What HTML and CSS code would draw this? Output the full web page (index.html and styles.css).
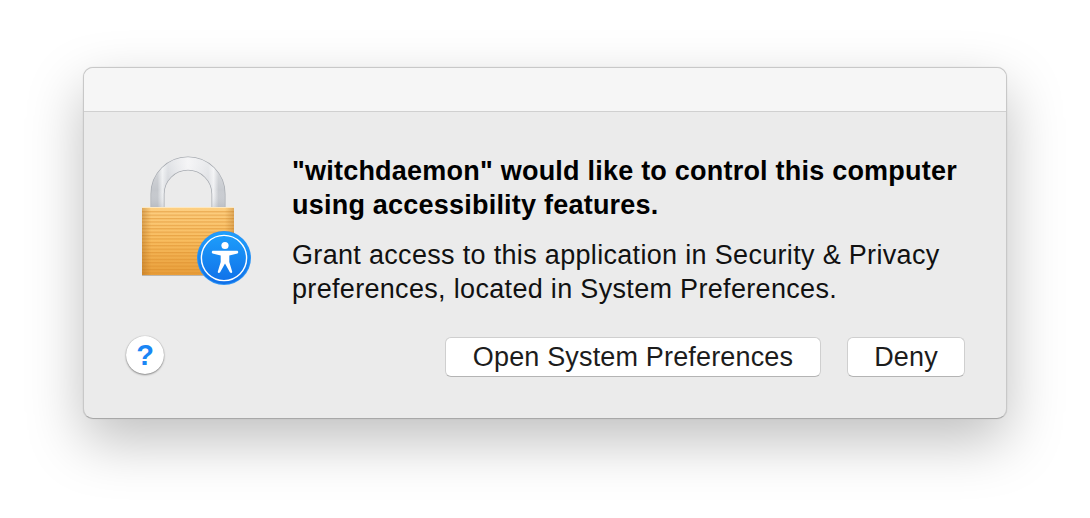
FILE: index.html
```html
<!DOCTYPE html>
<html lang="en">
<head>
    <meta charset="UTF-8">
    <meta name="viewport" content="width=device-width, initial-scale=1.0">
    <title>Accessibility Access</title>
    <link rel="stylesheet" href="styles.css">
</head>
<body>

    <div class="dialog-window">
        <div class="dialog-titlebar"></div>

        <div class="dialog-body">
            <!-- Lock with accessibility badge -->
            <svg class="dialog-icon" width="120" height="140" viewBox="0 0 120 140">
                <defs>
                    <linearGradient id="shackleGrad" x1="0" y1="0" x2="1" y2="0">
                        <stop offset="0" stop-color="#c4c7cc"/>
                        <stop offset="0.08" stop-color="#eceef0"/>
                        <stop offset="0.17" stop-color="#d2d5da"/>
                        <stop offset="0.5" stop-color="#f0f0f2"/>
                        <stop offset="0.83" stop-color="#dcdee2"/>
                        <stop offset="0.92" stop-color="#f0f1f3"/>
                        <stop offset="1" stop-color="#c8cbd0"/>
                    </linearGradient>
                    <linearGradient id="shackleShade" x1="0" y1="0" x2="0" y2="1">
                        <stop offset="0" stop-color="#ffffff" stop-opacity="0.35"/>
                        <stop offset="0.6" stop-color="#ffffff" stop-opacity="0"/>
                        <stop offset="1" stop-color="#8f95a0" stop-opacity="0.25"/>
                    </linearGradient>
                    <linearGradient id="bodyGrad" x1="0" y1="0" x2="0" y2="1">
                        <stop offset="0" stop-color="#fdcf82"/>
                        <stop offset="0.5" stop-color="#f8bc5e"/>
                        <stop offset="1" stop-color="#e89e3a"/>
                    </linearGradient>
                    <linearGradient id="bodySide" x1="0" y1="0" x2="1" y2="0">
                        <stop offset="0" stop-color="#a8691f" stop-opacity="0.4"/>
                        <stop offset="0.1" stop-color="#a8691f" stop-opacity="0"/>
                        <stop offset="0.9" stop-color="#a8691f" stop-opacity="0"/>
                        <stop offset="1" stop-color="#a8691f" stop-opacity="0.35"/>
                    </linearGradient>
                    <pattern id="bodyStripes" width="4" height="3.4" patternUnits="userSpaceOnUse">
                        <rect width="4" height="1.2" fill="#d98a28" fill-opacity="0.5"/>
                    </pattern>
                    <linearGradient id="badgeGrad" x1="0" y1="0" x2="0" y2="1">
                        <stop offset="0" stop-color="#1ea0fc"/>
                        <stop offset="1" stop-color="#0f6fe8"/>
                    </linearGradient>
                </defs>

                <path d="M22.5 58 V44 A30.5 30.5 0 0 1 83.5 44 V58" fill="none" stroke="#a6aab0" stroke-width="14"/>
                <path d="M22.5 58 V44 A30.5 30.5 0 0 1 83.5 44 V58" fill="none" stroke="url(#shackleGrad)" stroke-width="12.6"/>
                <path d="M22.5 58 V44 A30.5 30.5 0 0 1 83.5 44 V58" fill="none" stroke="url(#shackleShade)" stroke-width="12.6"/>

                <rect x="7" y="57" width="92" height="69" fill="#8d8172" fill-opacity="0.5"/>
                <rect x="7" y="57" width="92" height="68" fill="url(#bodyGrad)"/>
                <rect x="7" y="60" width="92" height="65" fill="url(#bodyStripes)"/>
                <rect x="7" y="57" width="92" height="68" fill="url(#bodySide)"/>
                <rect x="7" y="57" width="92" height="1" fill="#fde8c0"/>

                <circle cx="89" cy="108" r="27" fill="#2b93f5"/>
                <circle cx="89" cy="108" r="26" fill="url(#badgeGrad)"/>
                <circle cx="89" cy="108" r="22.6" fill="none" stroke="#fff" stroke-width="1.4"/>
                <circle cx="90" cy="95.5" r="3.6" fill="#fff"/>
                <path d="M77.5 100.8 L102.5 100.8 Q104 102.4 102.5 103.4 L94.3 105.5 L94.3 112 L97.3 122 Q96.8 123.6 95 122.6 L90 113.5 L85 122.6 Q83.2 123.6 82.7 122 L85.7 112 L85.7 105.5 L77.5 103.4 Q76 102.4 77.5 100.8 Z" fill="#fff"/>
            </svg>

            <div class="dialog-text">
                <p class="dialog-heading">"witchdaemon" would like to control this computer using accessibility features.</p>
                <p class="dialog-message">Grant access to this application in Security &amp; Privacy preferences, located in System Preferences.</p>
            </div>
        </div>

        <div class="dialog-footer">
            <button class="dialog-help">?</button>
            <div class="dialog-actions">
                <button class="dialog-btn dialog-btn-open">Open System Preferences</button>
                <button class="dialog-btn dialog-btn-deny">Deny</button>
            </div>
        </div>
    </div>

</body>
</html>
```

FILE: styles.css
```css
html, body {
    margin: 0;
    height: 100%;
    overflow: hidden;
}

body {
    background-color: #fff;
    font-family: 'Liberation Sans', Arial, sans-serif;
    padding: 67px 0 0 83px;
    box-sizing: border-box;
}

/* Window */
.dialog-window {
    width: 924px;
    height: 352px;
    box-sizing: border-box;
    background-color: #ebebeb;
    border: 1px solid #c8c8c8;
    border-bottom-color: #a8a8a8;
    border-radius: 10px;
    box-shadow: 0 22px 56px rgba(0, 0, 0, 0.25), 0 0 1px rgba(0, 0, 0, 0.2);
}

/* Title bar */
.dialog-titlebar {
    height: 43px;
    background-color: #f6f6f6;
    border-bottom: 1px solid #d0d0d0;
    border-radius: 9px 9px 0 0;
}

/* Icon and text */
.dialog-body {
    display: flex;
    padding-top: 38px;
}

.dialog-icon {
    display: block;
    flex: none;
    margin-left: 51px;
}

.dialog-text {
    margin-left: 37px;
    width: 690px;
    margin-top: 4px;
}

.dialog-heading {
    margin: 0 0 16px;
    font-size: 27px;
    font-weight: bold;
    line-height: 34px;
    letter-spacing: 0.22px;
    color: #000;
}

.dialog-message {
    margin: 0;
    font-size: 27px;
    line-height: 34px;
    letter-spacing: 0.32px;
    color: #111;
    width: 670px;
}

/* Footer */
.dialog-footer {
    display: flex;
    align-items: center;
    justify-content: space-between;
    padding: 0 41px 0 42px;
    margin-top: 27px;
}

.dialog-help {
    width: 38px;
    height: 38px;
    padding: 0;
    border: none;
    border-radius: 50%;
    background-color: #fff;
    box-shadow: 0 1px 2px rgba(0, 0, 0, 0.4), 0 0 1px rgba(0, 0, 0, 0.3);
    color: #1a86f5;
    font-family: 'Liberation Sans', Arial, sans-serif;
    font-size: 29px;
    font-weight: bold;
    line-height: 38px;
}

.dialog-actions {
    display: flex;
    gap: 26px;
    margin-top: 4px;
}

.dialog-btn {
    height: 40px;
    padding: 0;
    box-sizing: border-box;
    background-color: #fff;
    border: 1px solid #cfcfcf;
    border-bottom-color: #b4b4b4;
    border-radius: 6px;
    color: #1c1c1c;
    font-family: 'Liberation Sans', Arial, sans-serif;
    font-size: 27px;
    letter-spacing: 0.16px;
}

.dialog-btn-open {
    width: 376px;
}

.dialog-btn-deny {
    width: 118px;
}
```
